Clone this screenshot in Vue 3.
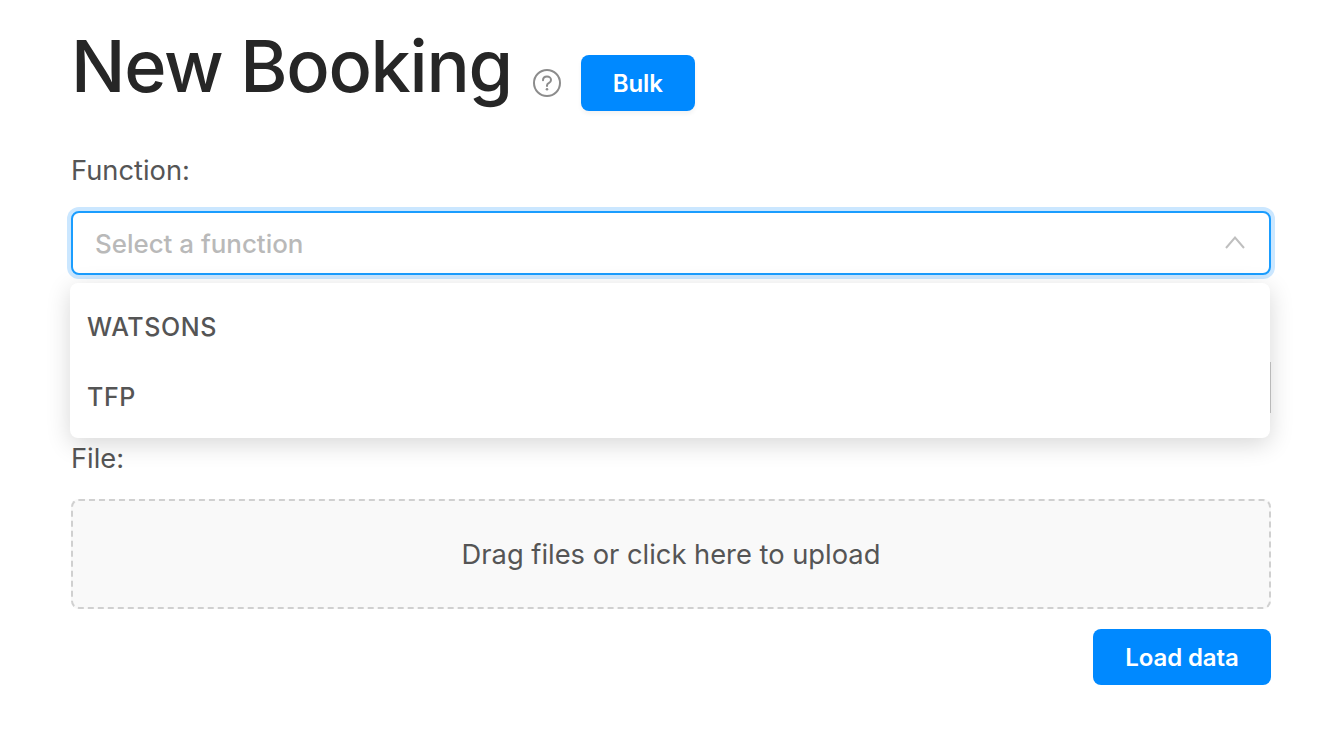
<script setup>
const options = ['WATSONS', 'TFP']
</script>

<template>
  <main class="page">
    <header class="head">
      <h1 class="title">New Booking</h1>
      <svg class="help" width="30" height="30" viewBox="0 0 30 30" fill="none">
        <circle cx="15" cy="15" r="13" stroke="#8c8c8c" stroke-width="2" />
        <path d="M11 12.200c0-2.300 1.800-3.700 4-3.700s4 1.400 4 3.400c0 1.500-.9 2.300-2 3-1.200.7-2 1.300-2 2.600v.5" stroke="#8c8c8c" stroke-width="2" stroke-linecap="round" />
        <circle cx="15" cy="21.200" r="1.300" fill="#8c8c8c" />
      </svg>
      <button class="btn bulk">Bulk</button>
    </header>

    <label class="label">Function:</label>
    <div class="select-wrap">
      <div class="select">
        <span class="placeholder">Select a function</span>
        <svg class="chevron" width="20" height="14" viewBox="0 0 20 14" fill="none">
          <path d="M1 13 10 2.500 19 13" stroke="#bfbfbf" stroke-width="2" />
        </svg>
      </div>
      <ul class="menu">
        <li v-for="o in options" :key="o" class="item">{{ o }}</li>
      </ul>
    </div>

    <div class="hidden-input"></div>

    <label class="label file-label">File:</label>
    <div class="drop">Drag files or click here to upload</div>

    <div class="actions">
      <button class="btn load">Load data</button>
    </div>
  </main>
</template>

<style scoped>
.page {
  box-sizing: border-box;
  width: 1325px;
  height: 735px;
  padding: 0 54px 0 71px;
  font-family: Inter, "Liberation Sans", sans-serif;
  color: #555;
  overflow: hidden;
}
.head {
  display: flex;
  align-items: flex-start;
  height: 112px;
}
.title {
  margin: 22px 0 0;
  font-size: 72px;
  line-height: 87px;
  font-weight: 500;
  letter-spacing: -1.300px;
  color: #262626;
}
.help {
  margin: 68px 0 0 20px;
}
.btn {
  border: 0;
  border-radius: 8px;
  background: #0089ff;
  color: #fff;
  font-family: inherit;
  font-size: 24px;
  font-weight: 600;
  letter-spacing: -0.1px;
  height: 56px;
  padding: 0;
}
.bulk {
  width: 114px;
  margin: 55px 0 0 19px;
  box-shadow: 0 3px 4px rgba(0, 0, 0, 0.05);
}
.label {
  display: block;
  font-size: 27.300px;
  line-height: 30px;
  margin-top: 44px;
  height: 30px;
}
.select-wrap {
  position: relative;
  margin-top: 25px;
}
.select {
  box-sizing: border-box;
  height: 64px;
  display: flex;
  align-items: center;
  justify-content: space-between;
  padding: 0 24px 0 22px;
  border: 2px solid #1a9dff;
  border-radius: 8px;
  box-shadow: 0 0 0 4px #cbe7ff;
  background: #fff;
}
.placeholder {
  font-size: 25.900px;
  font-weight: 500;
  color: #b9b9b9;
}
.chevron {
  margin-top: -2px;
}
.menu {
  position: absolute;
  z-index: 2;
  top: 72px;
  left: -1px;
  right: 1px;
  margin: 0;
  padding: 9px 0 6px;
  list-style: none;
  background: #fff;
  border-radius: 8px;
  box-shadow: 0 6px 24px rgba(0, 0, 0, 0.16);
}
.item {
  height: 70px;
  line-height: 70px;
  padding: 0 17px;
  font-size: 25px;
  font-weight: 500;
  letter-spacing: 0.6px;
}
.hidden-input {
  box-sizing: border-box;
  height: 51px;
  margin-top: 87px;
  border: 1px solid #c8c8c8;
}
.file-label {
  margin-top: 31px;
}
.drop {
  box-sizing: border-box;
  height: 110px;
  margin-top: 25px;
  display: flex;
  align-items: center;
  justify-content: center;
  border: 2px dashed #d0d0d0;
  border-radius: 8px;
  background: #f9f9f9;
  font-size: 27.300px;
  font-weight: 400;
}
.actions {
  display: flex;
  justify-content: flex-end;
  margin-top: 20px;
}
.load {
  width: 178px;
}
</style>

<style>
html, body { margin: 0; background: #fff; }
</style>
